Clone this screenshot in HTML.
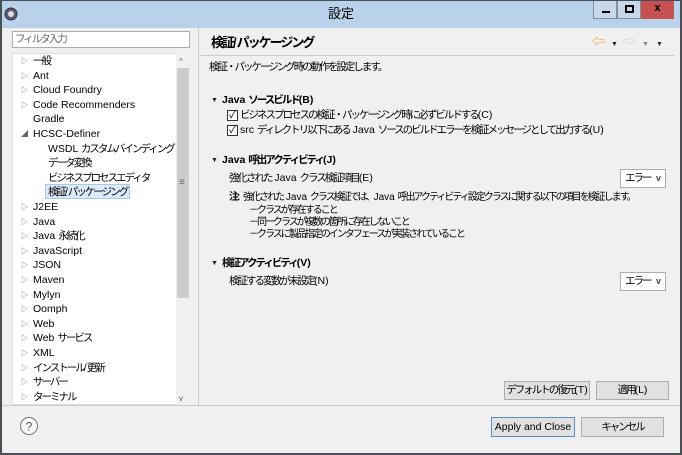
<!DOCTYPE html><html><head><meta charset="utf-8"><style>
*{margin:0;padding:0;box-sizing:border-box}
body{width:682px;height:455px;overflow:hidden;background:#f0f0f0;font-family:"Liberation Sans","Noto Sans CJK JP",sans-serif;font-size:10.5px;line-height:14px;color:#000;position:relative}
.a{position:absolute;white-space:nowrap;line-height:14px}
.j{letter-spacing:-2px}
.frame{position:absolute;left:0;top:0;width:682px;height:455px;border:2px solid #4a4f55;border-top:1px solid #4a4f55}
.tb{position:absolute;left:0;top:0;width:682px;height:28px;background:#b9d1ea}
.tri{font-size:7px;color:#555}
.btn{position:absolute;background:#e1e1e1;border:1px solid #adadad;text-align:center;line-height:17px;white-space:nowrap;overflow:hidden}
.combo{position:absolute;background:#fff;border:1px solid #abadb3;height:19px;width:46px;padding-left:4px;line-height:17px;white-space:nowrap}
.combo .v{position:absolute;right:4px;top:0;font-size:9px;color:#444;letter-spacing:0}
.cb{position:absolute;width:11px;height:11px;border:1px solid #333;background:#fff;font-size:10px;line-height:9px;text-align:center}
</style></head><body>
<div class="tb"></div>
<svg class="a" style="left:3px;top:6px" width="16" height="16"><circle cx="8" cy="8" r="6" fill="#5a5a78" stroke="#333"/><circle cx="8" cy="8" r="3" fill="#ddd"/></svg>
<div class="a" style="left:328px;top:7px;font-size:13px">設定</div>
<div class="a" style="left:593px;top:0;width:24px;height:19px;background:#c6d7ea;border:1px solid #7f8fa0"><div class="a" style="left:8px;top:10px;width:8px;height:2px;background:#000"></div></div>
<div class="a" style="left:617px;top:0;width:24px;height:19px;background:#c6d7ea;border:1px solid #7f8fa0"><div class="a" style="left:7px;top:4px;width:9px;height:8px;border:2px solid #000"></div></div>
<div class="a" style="left:641px;top:0;width:33px;height:19px;background:#c75050;color:#000;font-weight:bold;text-align:center;line-height:17px;font-size:11px">x</div>
<div class="a t" style="left:12px;top:31px;width:178px;height:17px;background:#fff;border:1px solid #abadb3;color:#666;padding-left:2px;line-height:15px">フィルタ入力</div>
<div class="a" style="left:12px;top:53px;width:178px;height:352px;background:#fff;border:1px solid #ddd"></div>
<div class="a" style="left:176px;top:53px;width:14px;height:352px;background:#f0f0f0"></div>
<div class="a" style="left:177px;top:68px;width:12px;height:230px;background:#cdcdcd"></div>
<div class="a" style="left:179px;top:55px;font-size:8px;color:#666">^</div>
<div class="a" style="left:179px;top:392px;font-size:8px;color:#666">v</div>
<div class="a" style="left:179px;top:176px;font-size:10px;color:#666">≡</div>
<div class="a" style="left:45px;top:184px;width:85px;height:15px;background:#dbe9f8;border:1px solid #a8c8ec"></div>
<div id="tree"></div>
<div class="a" style="left:198px;top:28px;width:1px;height:377px;background:#ccc"></div>
<div class="a" style="left:200px;top:55px;width:474px;height:1px;background:#ccc"></div>
<div class="a t" style="left:211px;top:36px;font-size:13px;font-weight:bold">検証/パッケージング</div>
<div class="a" style="left:592px;top:35px;color:#e8a030;font-size:13px">⇦</div><div class="a tri" style="left:611px;top:38px;color:#222">▼</div>
<div class="a" style="left:623px;top:35px;color:#ccc;font-size:13px">⇨</div><div class="a tri" style="left:642px;top:38px;color:#888">▼</div><div class="a tri" style="left:656px;top:38px;color:#333">▼</div>
<div class="a t" style="left:209px;top:60px">検証・パッケージング時の動作を設定します。</div>
<div class="a tri" style="left:211px;top:94px;color:#222">▼</div><div class="a t" style="left:222px;top:93px;font-weight:bold">Java ソースビルド(B)</div>
<div class="cb" style="left:227px;top:110px">✓</div><div class="a t" style="left:240px;top:108px">ビジネスプロセスの検証・パッケージング時に必ずビルドする(C)</div>
<div class="cb" style="left:227px;top:125px">✓</div><div class="a t" style="left:240px;top:123px">src ディレクトリ以下にある Java ソースのビルドエラーを検証メッセージとして出力する(U)</div>
<div class="a tri" style="left:211px;top:154px;color:#222">▼</div><div class="a t" style="left:222px;top:153px;font-weight:bold">Java 呼出アクティビティ(J)</div>
<div class="a t" style="left:229px;top:171px">強化された Java クラス検証項目(E)</div>
<div class="combo t" style="left:620px;top:169px">エラー<b class="v">v</b></div>
<div class="a t" style="left:229px;top:191px;font-size:10px"><b>注:</b> 強化された Java クラス検証では、Java 呼出アクティビティ設定クラスに関する以下の項目を検証します。</div>
<div class="a t" style="left:249px;top:204px;font-size:10px">－クラスが存在すること</div>
<div class="a t" style="left:249px;top:216px;font-size:10px">－同一クラスが複数の箇所に存在しないこと</div>
<div class="a t" style="left:249px;top:228px;font-size:10px">－クラスに製品指定のインタフェースが実装されていること</div>
<div class="a tri" style="left:211px;top:257px;color:#222">▼</div><div class="a t" style="left:222px;top:256px;font-weight:bold">検証アクティビティ(V)</div>
<div class="a t" style="left:229px;top:274px">検証する変数が未設定(N)</div>
<div class="combo t" style="left:620px;top:272px">エラー<b class="v">v</b></div>
<div class="btn t" style="left:504px;top:381px;width:86px;height:19px">デフォルトの復元(T)</div>
<div class="btn t" style="left:596px;top:381px;width:73px;height:19px">適用(L)</div>
<div class="a" style="left:0;top:405px;width:682px;height:1px;background:#ccc"></div>
<svg class="a" style="left:19px;top:416px" width="20" height="20"><circle cx="10" cy="10" r="8.5" fill="#fafafa" stroke="#777"/><text x="10" y="14.5" font-size="12" text-anchor="middle" fill="#555" font-family="Liberation Sans">?</text></svg>
<div class="btn" style="left:491px;top:417px;width:84px;height:20px;border-color:#5a8fd0;line-height:18px">Apply and Close</div>
<div class="btn t" style="left:581px;top:417px;width:83px;height:20px;line-height:18px">キャンセル</div>
<div class="frame"></div>
<script>
var t=[["▷","一般",0],["▷","Ant",0],["▷","Cloud Foundry",0],["▷","Code Recommenders",0],["","Gradle",0],["◢","HCSC-Definer",0],["","WSDL カスタムバインディング",1],["","データ変換",1],["","ビジネスプロセスエディタ",1],["","検証/パッケージング",1],["▷","J2EE",0],["▷","Java",0],["▷","Java 永続化",0],["▷","JavaScript",0],["▷","JSON",0],["▷","Maven",0],["▷","Mylyn",0],["▷","Oomph",0],["▷","Web",0],["▷","Web サービス",0],["▷","XML",0],["▷","インストール/更新",0],["▷","サーバー",0],["▷","ターミナル",0]];
var h="";t.forEach(function(e,i){var y=Math.round(54+i*14.6);if(e[0])h+='<div class="a" style="left:21px;top:'+(y+1)+'px;font-size:7px;color:#666">'+e[0]+'</div>';h+='<div class="a t" style="left:'+(e[2]?48:33)+'px;top:'+y+'px">'+e[1]+'</div>';});
document.getElementById("tree").innerHTML=h;
function wrap(n){if(n.nodeType==3){var s=n.nodeValue;if(/[\u3000-\u9fff\uff00-\uffef]/.test(s)){var d=document.createElement("span");d.innerHTML=s.replace(/([\u3000-\u9fff\uff00-\uffef]+)/g,'<span class="j">$1</span>');n.parentNode.replaceChild(d,n);}}else if(n.nodeType==1&&!n.classList.contains("v")){Array.prototype.slice.call(n.childNodes).forEach(wrap);}}
document.querySelectorAll(".t").forEach(wrap);
</script>
</body></html>
